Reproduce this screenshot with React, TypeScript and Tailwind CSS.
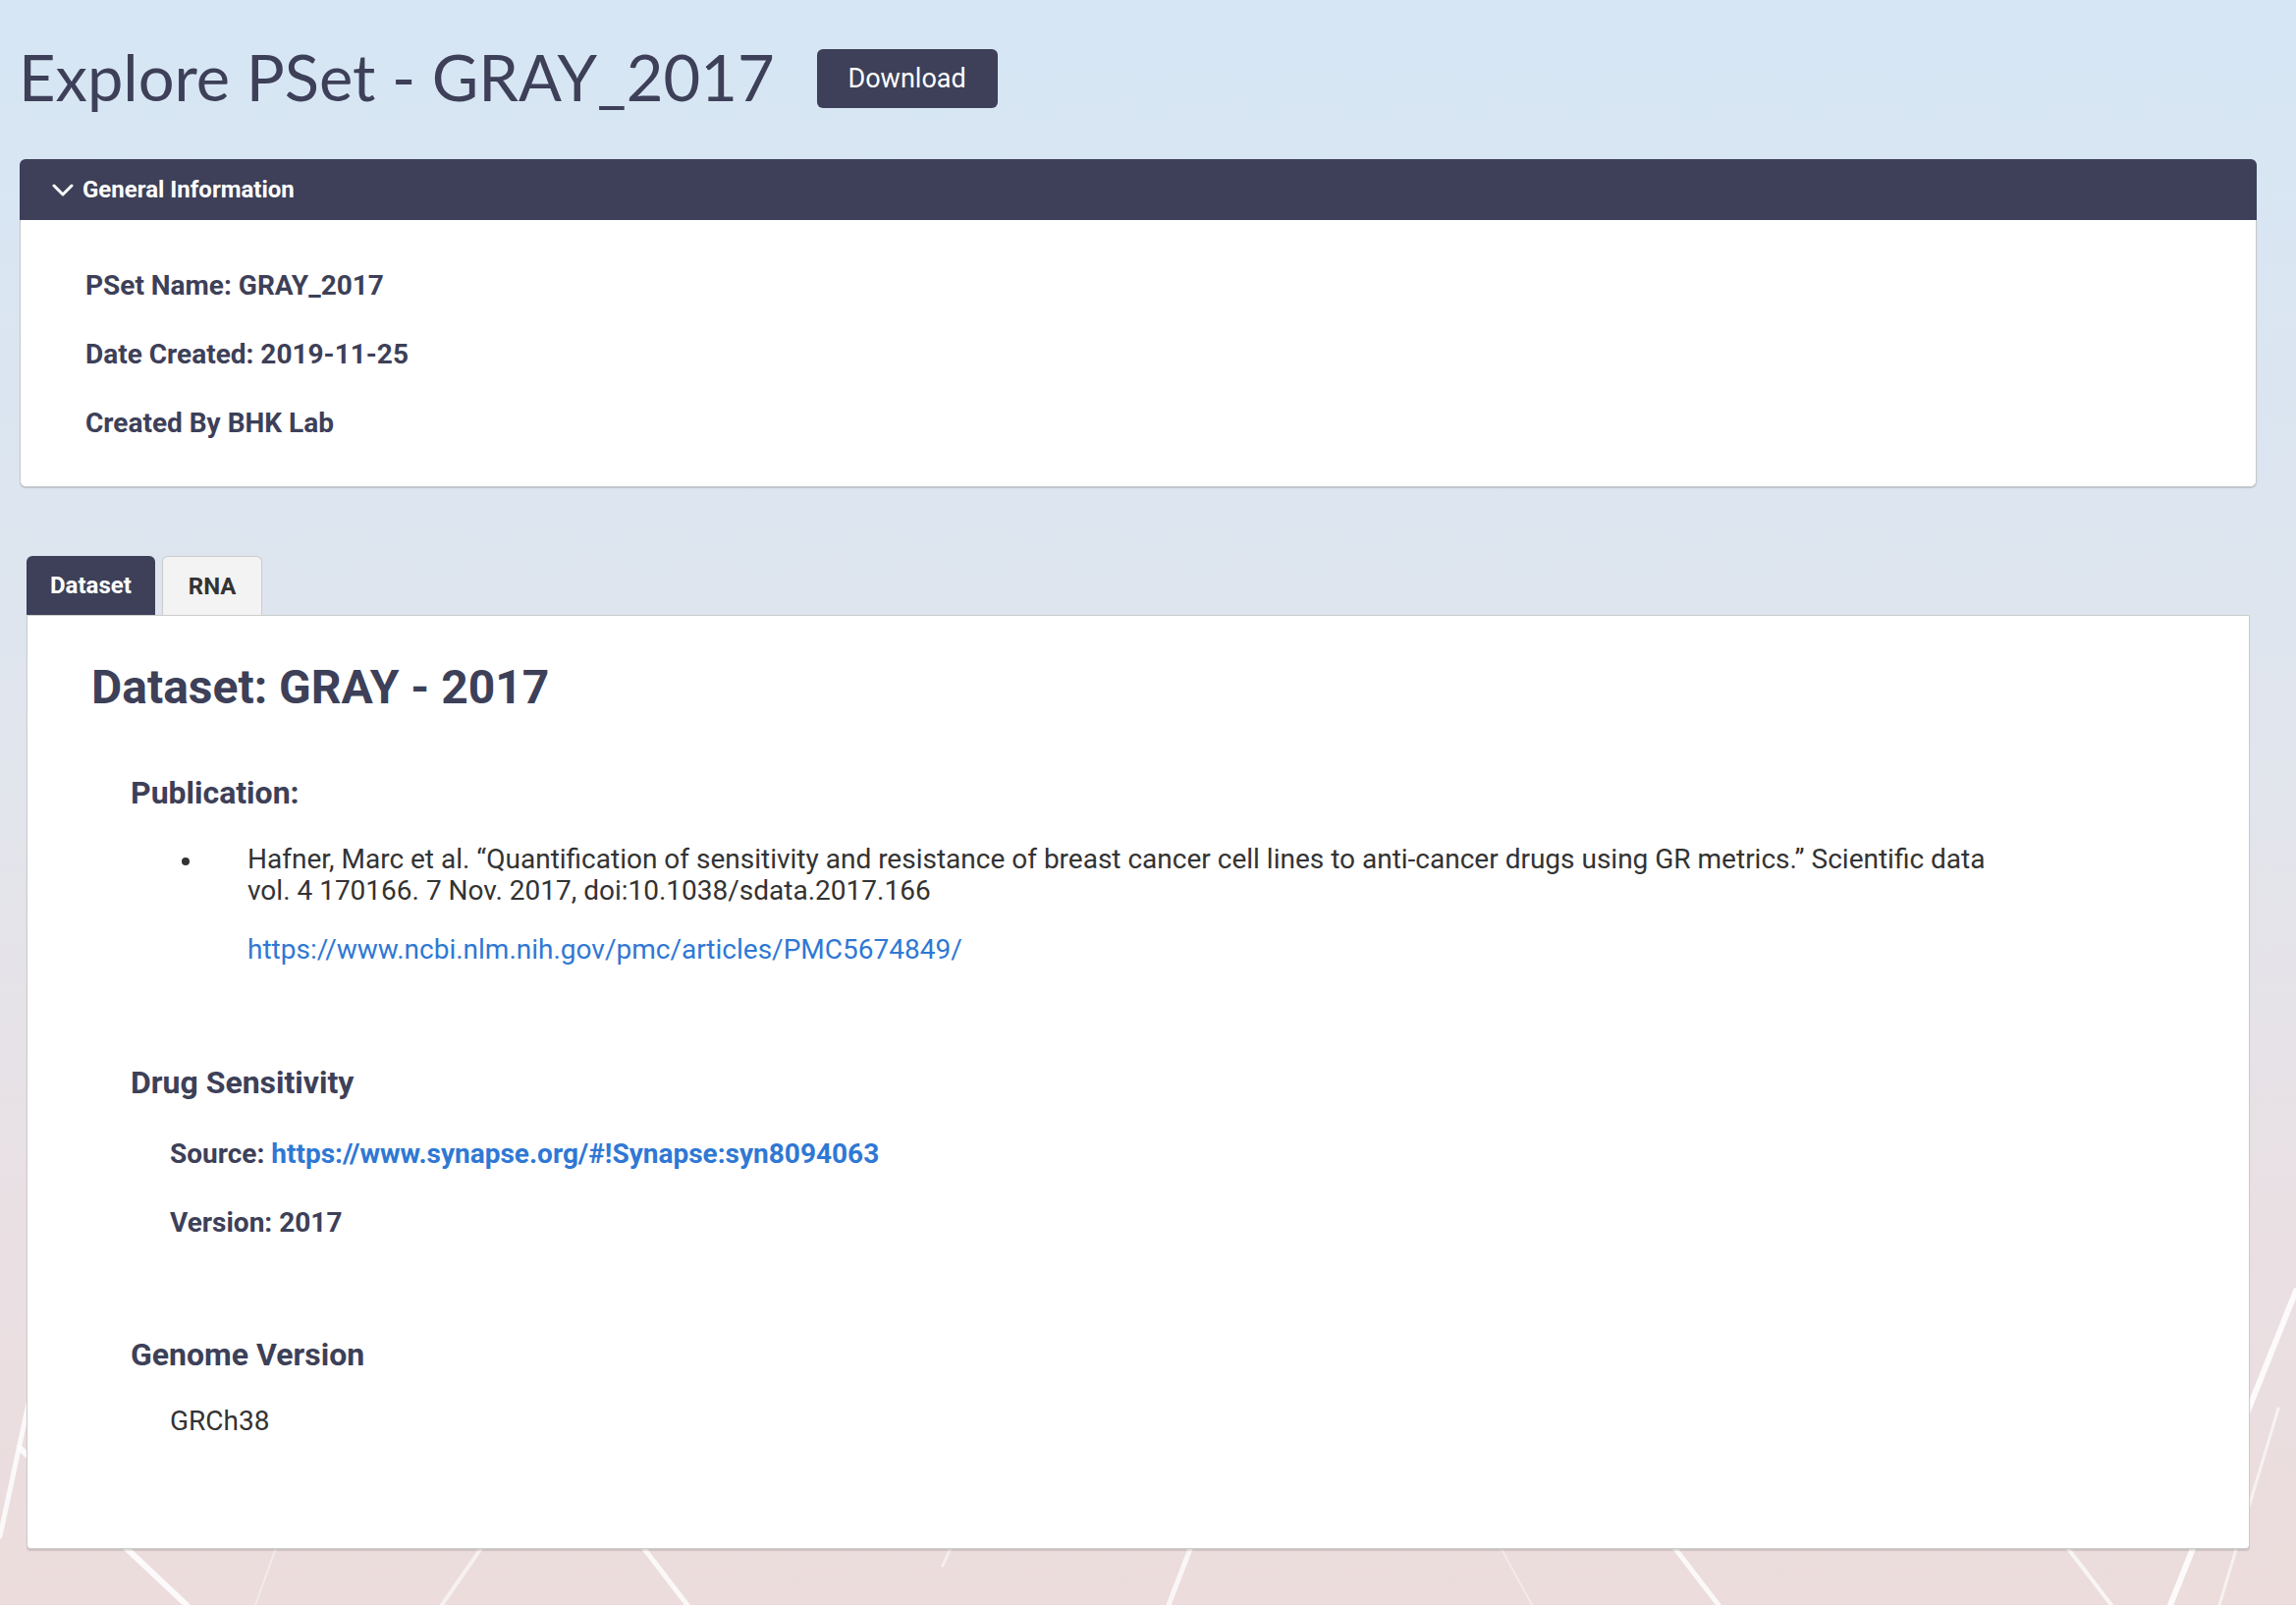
import { useState } from "react";

const Chevron = () => (
	<svg width="22" height="13" viewBox="0 0 22 13" fill="none" className="shrink-0">
		<path d="M2 2 L11 11 L20 2" stroke="white" strokeWidth="3" strokeLinecap="round" strokeLinejoin="round"/>
	</svg>
);

// light streaks in the page background
const Streaks = () => (
	<svg className="pointer-events-none absolute bottom-0 left-0 w-full h-[360px]" viewBox="0 0 2338 360" preserveAspectRatio="none">
		<g stroke="white" strokeLinecap="round" fill="none">
			<path d="M20 200 L190 360" strokeWidth="6" opacity="0.85"/>
			<path d="M0 290 L30 150" strokeWidth="5" opacity="0.8"/>
			<path d="M540 230 L450 360" strokeWidth="4" opacity="0.6"/>
			<path d="M600 230 L700 360" strokeWidth="5" opacity="0.8"/>
			<path d="M1000 230 L960 320" strokeWidth="3" opacity="0.5"/>
			<path d="M1240 230 L1190 360" strokeWidth="5" opacity="0.75"/>
			<path d="M1650 230 L1750 360" strokeWidth="5" opacity="0.8"/>
			<path d="M2050 230 L2150 360" strokeWidth="4" opacity="0.7"/>
			<path d="M2338 40 L2210 360" strokeWidth="6" opacity="0.85"/>
			<path d="M2320 160 L2260 360" strokeWidth="3" opacity="0.6"/>
			<path d="M300 250 L260 360" strokeWidth="2" opacity="0.4"/>
			<path d="M1500 250 L1560 360" strokeWidth="2" opacity="0.4"/>
		</g>
	</svg>
);

const InfoRow = ({ children }: { children: React.ReactNode }) => (
	<div className="text-[28px] leading-[30px] font-bold text-[#3d4058]">{children}</div>
);

const GeneralInfo = () => {
	const [open, setOpen] = useState(true);
	return (
		<div className="ml-[20px] w-[2278px]">
			<button
				onClick={() => setOpen(!open)}
				className="flex w-full h-[62px] items-center gap-[9px] pl-[33px] rounded-t-[6px] bg-[#3d4058] text-white text-[24px] font-bold"
			>
				<Chevron/>
				<span>General Information</span>
			</button>
			{open && (
				<div className="flex flex-col gap-[40px] pl-[66px] pt-[52px] pb-[49px] bg-white border border-t-0 border-[#c9c9c9] rounded-b-[6px] shadow-[0_1px_1px_rgba(0,0,0,0.15)]">
					<InfoRow>PSet Name: GRAY_2017</InfoRow>
					<InfoRow>Date Created: 2019-11-25</InfoRow>
					<InfoRow>Created By BHK Lab</InfoRow>
				</div>
			)}
		</div>
	);
};

const SectionTitle = ({ children, className = "" }: { children: React.ReactNode; className?: string }) => (
	<div className={`text-[32px] leading-[36px] font-bold text-[#3d4058] ${className}`}>{children}</div>
);

const DatasetTab = () => (
	<div className="pl-[65px] pt-[45px] pb-[113px]">
		<h1 className="text-[48px] leading-[56px] font-bold text-[#3d4058]">Dataset: GRAY - 2017</h1>

		<div className="pl-[40px]">
			<SectionTitle className="mt-[61px]">Publication:</SectionTitle>
			<ul className="mt-[34px] pl-[52px] text-[28px] leading-[32px] text-[#333333]">
				<li className="flex">
					<span className="w-[67px] shrink-0 pt-[14px]">
						<span className="block w-[8px] h-[8px] rounded-full bg-[#333333]"/>
					</span>
					<div>
						<div className="w-[1790px]">
							Hafner, Marc et al. “Quantification of sensitivity and resistance of breast cancer cell lines to anti-cancer drugs using GR metrics.” Scientific data vol. 4 170166. 7 Nov. 2017, doi:10.1038/sdata.2017.166
						</div>
						<a href="#" className="block mt-[28px] text-[#2f78d4]">https://www.ncbi.nlm.nih.gov/pmc/articles/PMC5674849/</a>
					</div>
				</li>
			</ul>

			<SectionTitle className="mt-[101px]">Drug Sensitivity</SectionTitle>
			<div className="pl-[40px] text-[28px] leading-[32px] font-bold text-[#3d4058]">
				<div className="mt-[39px]">
					Source: <a href="#" className="text-[#2f78d4]">https://www.synapse.org/#!Synapse:syn8094063</a>
				</div>
				<div className="mt-[38px]">Version: 2017</div>
			</div>

			<SectionTitle className="mt-[100px]">Genome Version</SectionTitle>
			<div className="pl-[40px] mt-[34px] text-[28px] leading-[32px] text-[#333333]">GRCh38</div>
		</div>
	</div>
);

export default function App() {
	const [tab, setTab] = useState<"dataset" | "rna">("dataset");

	const active = "h-[60px] px-[24px] rounded-t-[6px] bg-[#3d4058] text-white text-[24px] font-bold";
	const idle = "h-[60px] px-[26px] rounded-t-[6px] bg-[#f3f3f3] border border-b-0 border-[#cccccc] text-[#333333] text-[24px] font-bold";

	return (
		<div
			className="relative min-h-screen overflow-hidden bg-[linear-gradient(180deg,#d6e6f4_0%,#dce5f0_30%,#e2e5ec_50%,#e9e0e4_75%,#ecdcdc_100%)]"
			style={{ fontFamily: "Roboto, 'Liberation Sans', sans-serif" }}
		>
			<Streaks/>
			<div className="relative pb-[57px]">
				<div className="flex items-start gap-[43px] pl-[19px] pt-[38px]">
					<div className="text-[65px] leading-[80px] text-[#3d4058]" style={{ fontFamily: "Lato, 'Open Sans', sans-serif" }}>
						Explore PSet - GRAY_2017
					</div>
					<button className="mt-[12px] h-[60px] w-[184px] rounded-[6px] bg-[#3d4058] text-white text-[27px]">
						Download
					</button>
				</div>

				<div className="mt-[44px]">
					<GeneralInfo/>
				</div>

				<div className="mt-[70px] ml-[27px] w-[2264px]">
					<div className="flex gap-[7px]">
						<button onClick={() => setTab("dataset")} className={tab === "dataset" ? active : idle}>
							Dataset
						</button>
						<button onClick={() => setTab("rna")} className={tab === "rna" ? active : idle}>
							RNA
						</button>
					</div>
					<div className="bg-white border border-[#cccccc] rounded-b-[4px] shadow-[0_2px_1px_rgba(0,0,0,0.12)]">
						{tab === "dataset" ? <DatasetTab/> : <div className="h-[948px]"/>}
					</div>
				</div>
			</div>
		</div>
	);
}
